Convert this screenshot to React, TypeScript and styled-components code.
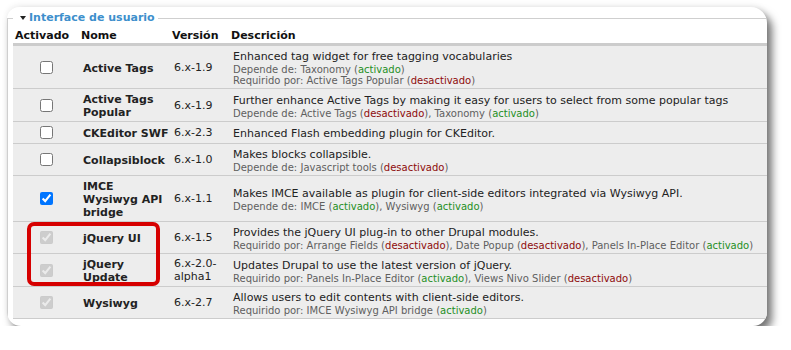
import styled, { createGlobalStyle } from 'styled-components'

// módulos del grupo "Interface de usuario"
type Link = [string, boolean]

type Module = {
  name: string
  version: string
  checked: boolean
  locked?: boolean
  description: string
  depends?: Link[]
  required?: Link[]
}

const modules: Module[] = [
  {
    name: 'Active Tags',
    version: '6.x-1.9',
    checked: false,
    description: 'Enhanced tag widget for free tagging vocabularies',
    depends: [['Taxonomy', true]],
    required: [['Active Tags Popular', false]],
  },
  {
    name: 'Active Tags Popular',
    version: '6.x-1.9',
    checked: false,
    description: 'Further enhance Active Tags by making it easy for users to select from some popular tags',
    depends: [['Active Tags', false], ['Taxonomy', true]],
  },
  {
    name: 'CKEditor SWF',
    version: '6.x-2.3',
    checked: false,
    description: 'Enhanced Flash embedding plugin for CKEditor.',
  },
  {
    name: 'Collapsiblock',
    version: '6.x-1.0',
    checked: false,
    description: 'Makes blocks collapsible.',
    depends: [['Javascript tools', false]],
  },
  {
    name: 'IMCE Wysiwyg API bridge',
    version: '6.x-1.1',
    checked: true,
    description: 'Makes IMCE available as plugin for client-side editors integrated via Wysiwyg API.',
    depends: [['IMCE', true], ['Wysiwyg', true]],
  },
  {
    name: 'jQuery UI',
    version: '6.x-1.5',
    checked: true,
    locked: true,
    description: 'Provides the jQuery UI plug-in to other Drupal modules.',
    required: [['Arrange Fields', false], ['Date Popup', false], ['Panels In-Place Editor', true]],
  },
  {
    name: 'jQuery Update',
    version: '6.x-2.0-alpha1',
    checked: true,
    locked: true,
    description: 'Updates Drupal to use the latest version of jQuery.',
    required: [['Panels In-Place Editor', true], ['Views Nivo Slider', false]],
  },
  {
    name: 'Wysiwyg',
    version: '6.x-2.7',
    checked: true,
    locked: true,
    description: 'Allows users to edit contents with client-side editors.',
    required: [['IMCE Wysiwyg API bridge', true]],
  },
]

const GlobalStyle = createGlobalStyle`
  body {
    margin: 0;
    background: #fff;
    font-family: "DejaVu Sans", Verdana, sans-serif;
    color: #222;
  }
`

const Page = styled.div`
  padding: 7px 0 0 7px;
`

const Card = styled.div`
  position: relative;
  width: 760px;
  height: 319px;
  background: #fff;
  border-radius: 12px 16px 14px 14px;
  overflow: hidden;
  box-shadow: 5px 6px 9px rgba(0, 0, 0, 0.55), 0 -2px 6px rgba(0, 0, 0, 0.06);
`

const Fieldset = styled.fieldset`
  box-sizing: border-box;
  width: 800px;
  margin: 4px 0 0;
  padding: 0 0 30px 5px;
  border: 1px solid #cfcfcf;
  min-width: 0;
`

const Legend = styled.legend`
  padding: 0 3px 0 7px;
  font-size: 11px;
  line-height: 14px;
  font-weight: bold;
  color: #3d8fcc;
  display: flex;
  align-items: center;
`

const Arrow = styled.span`
  width: 0;
  height: 0;
  margin-right: 3px;
  border-left: 3px solid transparent;
  border-right: 3px solid transparent;
  border-top: 4px solid #222;
`

const Table = styled.table`
  width: 100%;
  table-layout: fixed;
  border-collapse: separate;
  border-spacing: 0;
  font-size: 11px;
`

const Th = styled.th<{ $w?: number }>`
  box-sizing: border-box;
  width: ${(p) => (p.$w ? `${p.$w}px` : 'auto')};
  padding: 4px 2px 0;
  text-align: left;
  line-height: 14px;
  font-weight: bold;
  color: #111;
  border-bottom: 3px solid #cccccc;
`

const Td = styled.td`
  padding: 0 2px 0 4px;
  background: #ededed;
  border-bottom: 1px solid #cccccc;
  vertical-align: middle;
  line-height: 13px;
`

const CheckCell = styled(Td)`
  padding: 0;
  text-align: center;
`

const Check = styled.input`
  margin: 4px 0 4px 1px;
  width: 13px;
  height: 13px;
  vertical-align: middle;
`

const NameCell = styled(Td)`
  padding: 4px 0 2px 4px;
  font-weight: bold;
`

const DescCell = styled(Td)`
  padding: 4px 4px 2px;
  white-space: nowrap;
`

const Main = styled.div`
  line-height: 14px;
  color: #222;
`

const Sub = styled.div`
  font-size: 10px;
  line-height: 11px;
  color: #5f5f5f;
`

const State = styled.span<{ $on: boolean }>`
  color: ${(p) => (p.$on ? '#1f8f1f' : '#8e0b0b')};
`

const Highlight = styled.div`
  position: absolute;
  left: 20px;
  top: 215px;
  width: 133px;
  height: 64px;
  box-sizing: border-box;
  border: 4px solid #d60000;
  border-radius: 7px;
  pointer-events: none;
`

const LinkList = ({ label, items }: { label: string; items: Link[] }) => (
  <Sub>
    {label}{' '}
    {items.map(([name, on], i) => (
      <span key={name}>
        {i > 0 && ', '}
        {name} (<State $on={on}>{on ? 'activado' : 'desactivado'}</State>)
      </span>
    ))}
  </Sub>
)

const App = () => {
  return (
    <>
      <GlobalStyle/>
      <Page>
        <Card>
          <Fieldset>
            <Legend>
              <Arrow/>
              Interface de usuario
            </Legend>
            <Table>
              <thead>
              <tr>
                <Th $w={66}>Activado</Th>
                <Th $w={91}>Nome</Th>
                <Th $w={59}>Versión</Th>
                <Th>Descrición</Th>
              </tr>
              </thead>
              <tbody>
              {modules.map((m) => (
                <tr key={m.name}>
                  <CheckCell>
                    <Check type="checkbox" defaultChecked={m.checked} disabled={m.locked}/>
                  </CheckCell>
                  <NameCell>{m.name}</NameCell>
                  <Td>{m.version}</Td>
                  <DescCell>
                    <Main>{m.description}</Main>
                    {m.depends && <LinkList label="Depende de:" items={m.depends}/>}
                    {m.required && <LinkList label="Requirido por:" items={m.required}/>}
                  </DescCell>
                </tr>
              ))}
              </tbody>
            </Table>
          </Fieldset>
          {/* marca roja sobre jQuery UI / jQuery Update */}
          <Highlight/>
        </Card>
      </Page>
    </>
  )
}

export default App
